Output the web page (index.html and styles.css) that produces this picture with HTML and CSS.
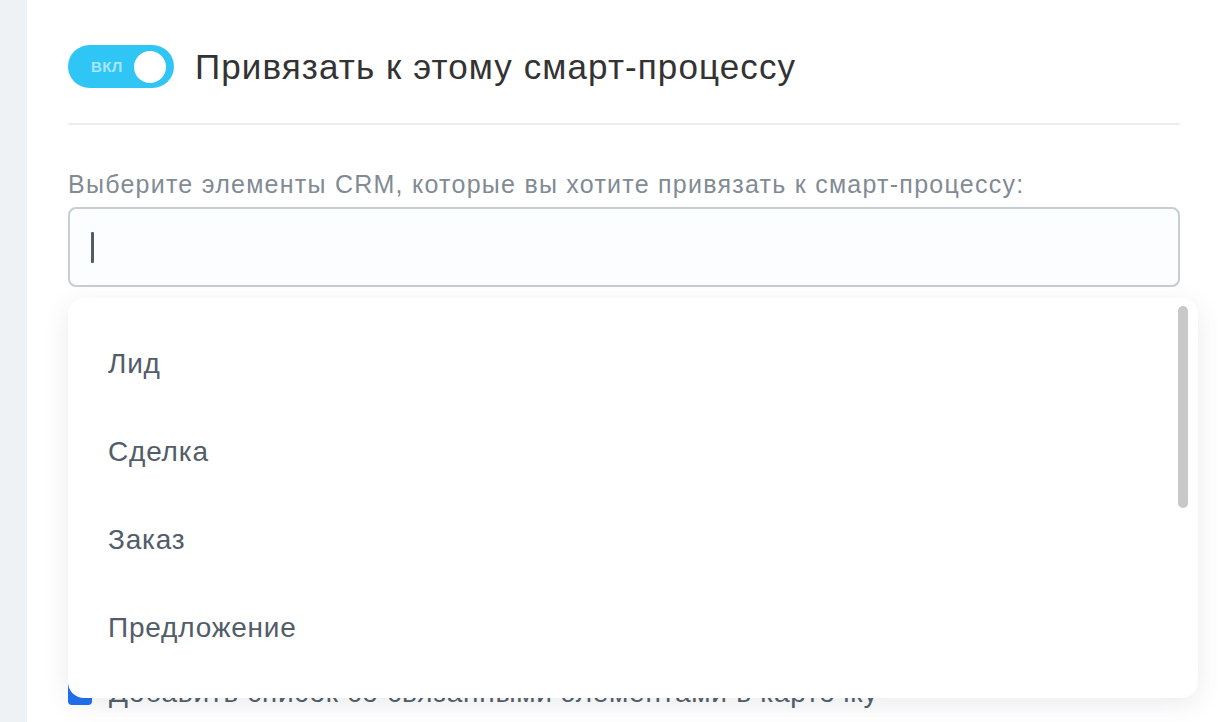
FILE: index.html
```html
<!DOCTYPE html>
<html lang="ru">
<head>
<meta charset="utf-8">
<title>Привязка</title>
<link rel="stylesheet" href="styles.css">
</head>
<body>
<div class="panel">
  <div class="header">
    <div class="toggle">
      <span class="toggle-label">вкл</span>
      <span class="toggle-knob"></span>
    </div>
    <div class="title">Привязать к этому смарт-процессу</div>
  </div>
  <div class="divider"></div>
  <div class="field-label">Выберите элементы CRM, которые вы хотите привязать к смарт-процессу:</div>
  <div class="input"><span class="caret"></span></div>
  <div class="check-row">
    <span class="checkbox"></span>
    <span class="check-text">Добавить список со связанными элементами в карточку</span>
  </div>
  <div class="dropdown">
    <div class="item">Лид</div>
    <div class="item">Сделка</div>
    <div class="item">Заказ</div>
    <div class="item">Предложение</div>
    <div class="scrollbar"></div>
  </div>
</div>
</body>
</html>
```
FILE: styles.css
```css
html, body {
  margin: 0;
  height: 100%;
}
body {
  background: #eef2f4;
  font-family: "Liberation Sans", Arial, sans-serif;
  overflow: hidden;
}
.panel {
  position: relative;
  margin-left: 27px;
  height: 100%;
  background: #fff;
  padding: 45px 38px 0 41px;
  box-sizing: border-box;
}
.header {
  display: flex;
  align-items: center;
  gap: 21px;
  height: 43px;
}
.toggle {
  width: 106px;
  height: 43px;
  border-radius: 22px;
  background: #2fc6f6;
  display: flex;
  align-items: center;
  box-sizing: border-box;
  padding: 0 8px 0 23px;
  justify-content: space-between;
  flex-shrink: 0;
}
.toggle-label {
  color: #a9e7fb;
  font-size: 15px;
  font-weight: bold;
  text-transform: uppercase;
  letter-spacing: 0.4px;
}
.toggle-knob {
  width: 32px;
  height: 32px;
  border-radius: 50%;
  background: #fff;
}
.title {
  font-size: 35px;
  color: #333;
  line-height: 43px;
  letter-spacing: 1.1px;
}
.divider {
  height: 2px;
  background: #ebedef;
  margin-top: 35px;
}
.field-label {
  margin-top: 45px;
  font-size: 25px;
  line-height: 28px;
  color: #828b95;
  letter-spacing: 1.25px;
}
.input {
  margin-top: 9px;
  height: 80px;
  border: 2px solid #c6cdd3;
  border-radius: 8px;
  background: #fcfdfe;
  box-sizing: border-box;
  display: flex;
  align-items: center;
  padding-left: 21px;
}
.caret {
  width: 3px;
  height: 31px;
  border-radius: 1px;
  background: #525c69;
}
.check-row {
  margin-top: 390px;
  display: flex;
  align-items: center;
  gap: 17px;
}
.checkbox {
  width: 24px;
  height: 24px;
  border-radius: 4px;
  background: #1e6ef0;
}
.check-text {
  font-size: 28px;
  color: #525c69;
  letter-spacing: 0.75px;
}
.dropdown {
  position: absolute;
  left: 41px;
  top: 298px;
  width: 1130px;
  height: 400px;
  box-sizing: border-box;
  padding: 22px 0 26px 40px;
  background: #fff;
  border-radius: 16px;
  box-shadow: 0 6px 24px rgba(83, 92, 105, 0.12);
}
.item {
  height: 88px;
  display: flex;
  align-items: center;
  font-size: 28px;
  color: #535c69;
  letter-spacing: 0.8px;
}
.scrollbar {
  position: absolute;
  right: 10px;
  top: 8px;
  width: 10px;
  height: 202px;
  border-radius: 5px;
  background: #c8c8c8;
}
```
